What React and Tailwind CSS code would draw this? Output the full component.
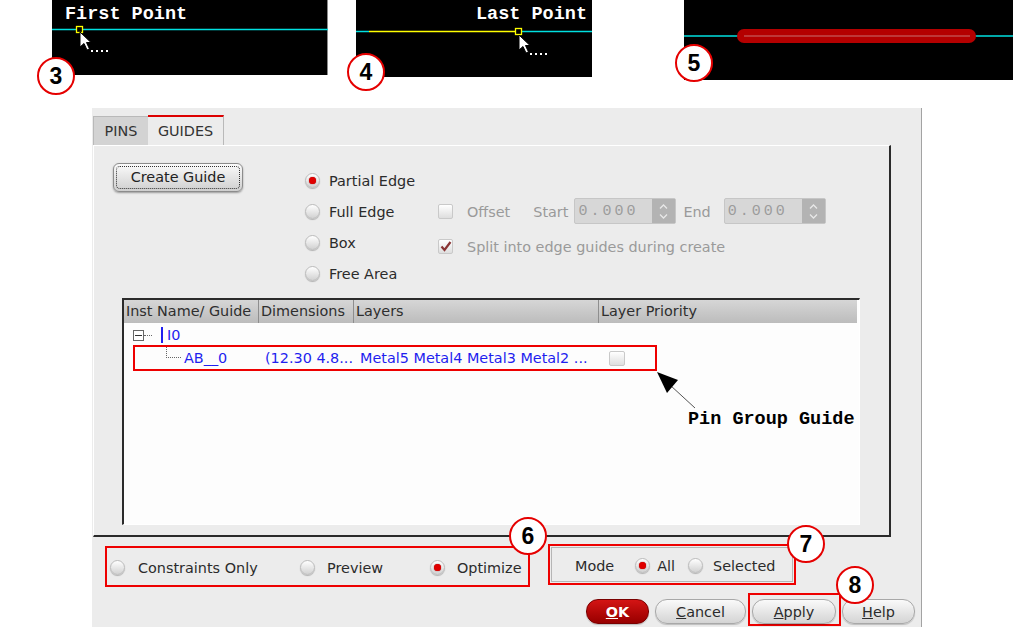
import React from 'react';

const mono = "font-['Liberation_Mono','Courier_New',monospace]";

function Radio({ checked }) {
  return (
    <span className="w-[15px] h-[15px] shrink-0 rounded-full border border-[#bcbcbc] bg-linear-to-b from-white to-[#d2d2d2] shadow-[0_1px_1px_rgba(0,0,0,0.25)] flex items-center justify-center">
      {checked && <span className="w-[7px] h-[7px] rounded-full bg-[#e00000] shadow-[0_0_1px_#800]" />}
    </span>
  );
}

function Check({ checked, small }) {
  return (
    <span className={`${small ? 'w-[16px] h-[15px]' : 'w-[15px] h-[15px]'} shrink-0 rounded-[2px] border border-[#c9c9c9] bg-linear-to-b from-white to-[#dedede] flex items-center justify-center`}>
      {checked && (
        <svg width="12" height="12" viewBox="0 0 12 12">
          <path d="M1.5 6.5 L4.5 10 L10.5 2" fill="none" stroke="#8a3434" strokeWidth="2.2" />
        </svg>
      )}
    </span>
  );
}

function Spin() {
  return (
    <div className="w-[102px] h-[26px] flex border border-[#c6c6c6] rounded-[2px] bg-[#d7d7d7]">
      <span className={`flex-1 flex items-center pl-[3px] text-[15px] tracking-[3px] text-[#9c9c9c] ${mono}`}>0.000</span>
      <span className="w-[23px] bg-[#b3b3b3] flex flex-col items-center justify-center gap-[5px]">
        <svg width="9" height="5" viewBox="0 0 9 5"><path d="M1 4.5 L4.5 1 L8 4.5" fill="none" stroke="#e8e8e8" strokeWidth="1.3" /></svg>
        <svg width="9" height="5" viewBox="0 0 9 5"><path d="M1 0.5 L4.5 4 L8 0.5" fill="none" stroke="#e8e8e8" strokeWidth="1.3" /></svg>
      </span>
    </div>
  );
}

function Cursor() {
  return <path d="M0 0 L0 15 L4 11.5 L7 18 L9.5 17 L6.5 10.5 L11 10.5 Z" fill="#fff" stroke="#000" strokeWidth="1" />;
}

function Badge({ n, className }) {
  return (
    <div className={`absolute w-[38px] h-[38px] rounded-full border-2 border-[#e50000] bg-white flex items-center justify-center font-['Liberation_Sans',Arial,sans-serif] font-bold text-[23px] text-black leading-none ${className}`}>
      {n}
    </div>
  );
}

function Btn({ children, w, red }) {
  return (
    <div
      className={`h-[25px] ${w} rounded-[12px] flex items-center justify-center pt-px border ${
        red
          ? 'bg-linear-to-b from-[#d41414] to-[#980000] border-[#7a0000] text-white font-bold'
          : 'bg-linear-to-b from-[#fafafa] to-[#d4d4d4] border-[#a8a8a8] text-[#2b2b2b]'
      } shadow-[0_1px_1px_rgba(0,0,0,0.2)]`}
    >
      {children}
    </div>
  );
}

export default function App() {
  return (
    <div className="relative w-[1013px] h-[633px] bg-white overflow-hidden font-['DejaVu_Sans',sans-serif] text-[14.4px] text-[#2b2b2b] leading-none">
      {/* captured canvas steps */}
      <div className="flex items-start h-[108px]">
        <div className="relative ml-[52px] w-[276px] h-[75px] bg-black border-r border-[#8a8a8a]">
          <svg className="absolute inset-0" width="276" height="75">
            <line x1="0" y1="29.5" x2="276" y2="29.5" stroke="#00e0e0" strokeWidth="1.5" />
            <rect x="24.5" y="26.5" width="6" height="6" fill="#000" stroke="#ffff00" strokeWidth="1.3" />
            <g transform="translate(28 32)"><Cursor /></g>
            <g fill="#fff">
              <rect x="39" y="50" width="2" height="2" /><rect x="44" y="50" width="2" height="2" />
              <rect x="49" y="50" width="2" height="2" /><rect x="54" y="50" width="2" height="2" />
            </g>
          </svg>
          <div className={`relative pl-[13px] pt-[6px] text-[18.5px] font-bold text-white ${mono}`}>First Point</div>
        </div>
        <div className="relative ml-[28px] w-[236px] h-[77px] bg-black">
          <svg className="absolute inset-0" width="236" height="77">
            <line x1="0" y1="31.5" x2="13" y2="31.5" stroke="#00e0e0" strokeWidth="1.5" />
            <line x1="13" y1="31.5" x2="159" y2="31.5" stroke="#ffff00" strokeWidth="1.5" />
            <line x1="165" y1="31.5" x2="236" y2="31.5" stroke="#00e0e0" strokeWidth="1.5" />
            <rect x="159.5" y="28.5" width="6" height="6" fill="#000" stroke="#ffff00" strokeWidth="1.3" />
            <g transform="translate(163 35)"><Cursor /></g>
            <g fill="#fff">
              <rect x="174" y="53" width="2" height="2" /><rect x="179" y="53" width="2" height="2" />
              <rect x="184" y="53" width="2" height="2" /><rect x="189" y="53" width="2" height="2" />
            </g>
          </svg>
          <div className={`relative flex justify-end pr-[5px] pt-[6px] text-[18.5px] font-bold text-white ${mono}`}>Last Point</div>
        </div>
        <div className="relative ml-[92px] w-[329px] h-[80px] bg-black">
          <svg className="absolute inset-0" width="329" height="80">
            <line x1="0" y1="36" x2="329" y2="36" stroke="#00e0e0" strokeWidth="1.5" />
            <rect x="53" y="29" width="239" height="14" rx="7" fill="#b40000" />
            <line x1="60" y1="36" x2="286" y2="36" stroke="#c87070" strokeWidth="1" />
          </svg>
        </div>
      </div>

      {/* dialog */}
      <div className="ml-[92px] w-[830px] h-[519px] bg-[#ececec] border-r border-[#a3a3a3] flex flex-col">
        <div className="flex items-end ml-[1px] mt-[7px] h-[30px]">
          <div className="w-[55px] h-[29px] bg-[#d3d3d3] border-l border-t border-[#b9b9b9] flex items-center justify-center pt-px text-[#333]">PINS</div>
          <div className="w-[76px] h-[30px] bg-[#ececec] border-t-2 border-t-[#dd0000] border-r border-r-[#b9b9b9] flex items-center justify-center pt-px text-[#333]">GUIDES</div>
        </div>

        <div className="ml-[1px] w-[798px] h-[392px] border-t border-l border-white border-r-2 border-b-2 border-r-[#2a2a2a] border-b-[#2a2a2a] flex flex-col">
          <div className="flex items-start pt-[17px] pl-[19px]">
            <div className="w-[130px] h-[29px] rounded-[6px] border border-[#8c8c8c] bg-linear-to-b from-[#fbfbfb] to-[#cfcfcf] p-[2px] shadow-[0_1px_2px_rgba(0,0,0,0.35)]">
              <div className="w-full h-full rounded-[4px] border border-dotted border-[#333] flex items-center justify-center text-[#222]">Create Guide</div>
            </div>

            <div className="ml-[62px] mt-[2px] w-[133px] flex flex-col">
              {['Partial Edge', 'Full Edge', 'Box', 'Free Area'].map((t, i) => (
                <div key={t} className="h-[31px] flex items-center gap-[9px]">
                  <Radio checked={i === 0} />
                  <span className="pt-[2px]">{t}</span>
                </div>
              ))}
            </div>

            <div className="mt-[34px] flex flex-col text-[#9a9a9a]">
              <div className="h-[28px] flex items-center">
                <Check />
                <span className="ml-[14px] pt-[2px]">Offset</span>
                <span className="ml-[23px] pt-[2px]">Start</span>
                <span className="ml-[6px]"><Spin /></span>
                <span className="ml-[7px] pt-[2px]">End</span>
                <span className="ml-[13px]"><Spin /></span>
              </div>
              <div className="mt-[7px] h-[28px] flex items-center">
                <Check checked />
                <span className="ml-[14px] pt-[2px]">Split into edge guides during create</span>
              </div>
            </div>
          </div>

          {/* guide table */}
          <div className="mt-[9px] ml-[28px] w-[738px] h-[227px] bg-[#fdfdfd] border-t-2 border-l-2 border-[#2b2b2b] border-r border-b border-r-white border-b-white flex flex-col">
            <div className="h-[23px] flex bg-linear-to-b from-[#d6d6d6] to-[#bcbcbc] text-[#2e2e2e] mr-[2px]">
              <div className="w-[135px] border-r border-[#8e8e8e] flex items-center pl-[2px]">Inst Name/ Guide</div>
              <div className="w-[95px] border-r border-[#8e8e8e] flex items-center pl-[2px]">Dimensions</div>
              <div className="w-[245px] border-r border-[#8e8e8e] flex items-center pl-[2px]">Layers</div>
              <div className="flex-1 flex items-center pl-[2px]">Layer Priority</div>
            </div>

            <div className="mt-[2px] h-[20px] flex items-center pl-[9px] text-[#1f1fef]">
              <span className="w-[11px] h-[11px] border border-[#666] bg-white flex items-center justify-center">
                <span className="w-[7px] h-px bg-[#333]" />
              </span>
              <span className="w-[8px] border-t border-dotted border-[#666]" />
              <span className="ml-[9px] w-[2px] h-[16px] bg-[#1f1fef]" />
              <span className="ml-[4px]">I0</span>
            </div>

            <div className="ml-[9px] w-[524px] h-[26px] border-2 border-[#ee0000] flex items-center text-[#1f1fef]">
              <div className="w-[124px] h-full flex items-center">
                <span className="ml-[31px] w-[15px] h-[11px] self-start border-l border-b border-dotted border-[#666]" />
                <span className="ml-[3px]">AB__0</span>
              </div>
              <div className="w-[95px] pl-[6px]">(12.30 4.8...</div>
              <div className="w-[245px] pl-[6px]">Metal5 Metal4 Metal3 Metal2 ...</div>
              <div className="pl-[10px]"><Check small /></div>
            </div>
          </div>
        </div>

        {/* bottom controls */}
        <div className="flex items-start h-[50px]">
          <div className="ml-[13px] mt-[9px] w-[425px] h-[41px] border-2 border-[#ee0000] flex items-center pl-[3px] pt-[1px]">
            <div className="w-[190px] flex items-center gap-[13px]"><Radio /><span className="pt-[2px]">Constraints Only</span></div>
            <div className="w-[130px] flex items-center gap-[12px]"><Radio /><span className="pt-[2px]">Preview</span></div>
            <div className="flex items-center gap-[12px]"><Radio checked /><span className="pt-[2px]">Optimize</span></div>
          </div>
          <div className="ml-[18px] mt-[7px] w-[248px] h-[41px] border-2 border-[#ee0000] p-px">
            <div className="w-full h-full border border-[#b5b5b5] flex items-center pl-[23px] pt-[2px]">
              <span className="pt-[2px]">Mode</span>
              <span className="ml-[21px]"><Radio checked /></span>
              <span className="ml-[7px] pt-[2px]">All</span>
              <span className="ml-[13px]"><Radio /></span>
              <span className="ml-[10px] pt-[2px]">Selected</span>
            </div>
          </div>
        </div>

        <div className="mt-[6px] h-[33px] flex items-start justify-end pr-[6px]">
          <div className="mt-[6px]"><Btn w="w-[63px]" red><span><span className="underline">O</span>K</span></Btn></div>
          <div className="ml-[6px] mt-[6px]"><Btn w="w-[91px]"><span><span className="underline">C</span>ancel</span></Btn></div>
          <div className="ml-[2px] w-[93px] h-[33px] border-2 border-[#ee0000] pl-[2px] pt-[4px]">
            <Btn w="w-[84px]"><span><span className="underline">A</span>pply</span></Btn>
          </div>
          <div className="ml-[1px] mt-[6px]"><Btn w="w-[73px]"><span><span className="underline">H</span>elp</span></Btn></div>
        </div>
      </div>

      {/* annotations */}
      <svg className="absolute left-[650px] top-[365px]" width="60" height="50">
        <line x1="20" y1="20" x2="45" y2="43" stroke="#555" strokeWidth="1" />
        <polygon points="7,7 28,15 17,28" fill="#000" />
      </svg>
      <div className={`absolute left-[688px] top-[411px] text-[18.5px] font-bold text-black ${mono}`}>Pin Group Guide</div>

      <Badge n="3" className="left-[37px] top-[57px]" />
      <Badge n="4" className="left-[347px] top-[53px]" />
      <Badge n="5" className="left-[675px] top-[44px]" />
      <Badge n="6" className="left-[509px] top-[517px]" />
      <Badge n="7" className="left-[787px] top-[525px]" />
      <Badge n="8" className="left-[836px] top-[566px]" />
    </div>
  );
}
